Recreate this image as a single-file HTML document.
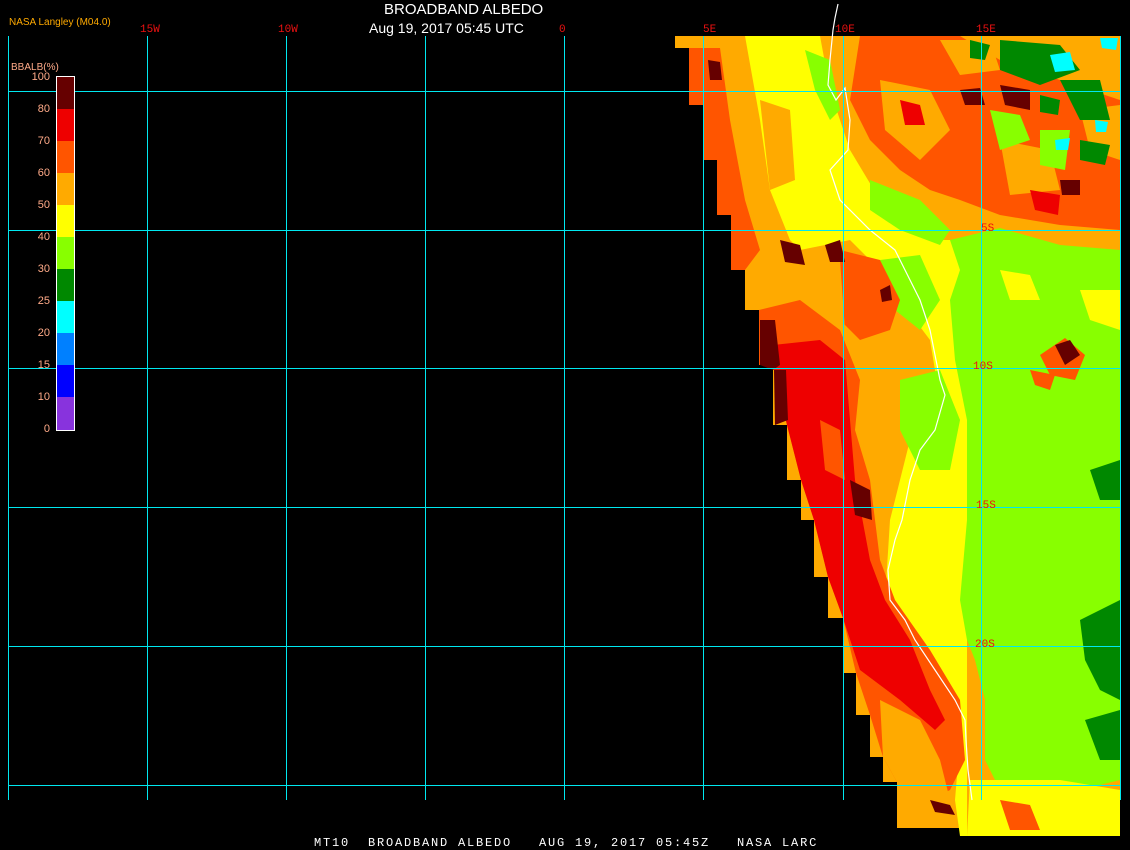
<!DOCTYPE html>
<html><head><meta charset="utf-8"><style>
html,body{margin:0;padding:0;background:#000;}
body{width:1130px;height:850px;position:relative;overflow:hidden;font-family:"Liberation Sans",sans-serif;}
.t{position:absolute;white-space:nowrap;}
.lbl{position:absolute;color:#ee1111;font-family:"Liberation Mono",monospace;font-size:11px;line-height:11px;}
.leg{position:absolute;color:#ffaa88;font-size:11px;line-height:11px;width:30px;text-align:right;left:20px;}
</style></head><body>
<svg width="1130" height="850" style="position:absolute;left:0;top:0">
<polygon fill="#ffaa00" points="675,36 1120,36 1120,836 967,836 967,828 897,828 897,782 883,782 883,757 870,757 870,715 856,715 856,673 843,673 843,618 828,618 828,577 814,577 814,520 801,520 801,480 787,480 787,425 773,425 773,365 759,365 759,310 745,310 745,270 731,270 731,215 717,215 717,160 703,160 703,105 689,105 689,48 675,48"/>
<!-- upper orange-red mottling -->
<polygon fill="#ff5500" points="860,36 960,36 1000,60 1120,100 1120,230 1060,225 1000,215 960,200 930,190 900,170 870,140 850,100"/>
<polygon fill="#ffaa00" points="880,80 930,90 950,130 920,160 885,130"/>
<polygon fill="#ffaa00" points="1000,140 1050,150 1060,190 1010,195"/>
<polygon fill="#ffaa00" points="1080,110 1120,105 1120,160 1090,150"/>
<polygon fill="#ffaa00" points="940,40 990,40 1000,70 960,75"/>
<polygon fill="#ee0000" points="900,100 920,105 925,125 905,125"/>
<polygon fill="#ee0000" points="1030,190 1060,195 1058,215 1035,210"/>
<polygon fill="#ff5500" points="689,48 720,48 730,120 745,200 760,250 745,270 731,270 731,215 717,215 717,160 703,160 703,105 689,105"/>
<polygon fill="#ffff00" points="745,36 820,36 830,90 850,150 880,200 930,240 967,240 967,836 960,836 955,800 960,740 940,690 900,640 885,600 890,520 900,480 910,440 940,400 930,340 900,300 880,270 850,240 800,250 790,240 770,190 760,120"/>
<polygon fill="#ffaa00" points="760,100 790,110 795,180 770,190"/>
<polygon fill="#88ff00" points="805,50 830,60 840,110 830,120 815,90"/>
<polygon fill="#88ff00" points="870,180 920,200 950,230 940,245 900,230 870,210"/>
<polygon fill="#88ff00" points="880,260 920,255 940,300 920,330 895,310"/>
<polygon fill="#ff5500" points="840,250 880,260 900,300 890,330 860,340 840,320"/>
<polygon fill="#ffaa00" points="800,260 840,260 845,330 820,340 800,300"/>
<!-- green right-lower -->
<polygon fill="#88ff00" points="950,240 1000,228 1060,245 1120,250 1120,780 1080,790 1040,782 1000,790 985,760 985,700 975,660 967,640 960,600 967,520 967,420 955,360 950,300 960,270"/>
<polygon fill="#88ff00" points="900,380 940,370 960,420 950,470 920,470 900,430"/>
<polygon fill="#ffff00" points="1000,270 1030,275 1040,300 1010,300"/>
<polygon fill="#ffff00" points="1080,290 1120,290 1120,330 1090,320"/>
<polygon fill="#008800" points="1080,620 1120,600 1120,700 1100,690 1085,660"/>
<polygon fill="#008800" points="1085,720 1120,710 1120,760 1100,760"/>
<polygon fill="#008800" points="1090,470 1120,460 1120,500 1100,500"/>
<polygon fill="#ff5500" points="1040,355 1065,338 1085,355 1075,380 1050,375"/>
<polygon fill="#660000" points="1055,345 1070,340 1080,355 1065,365"/>
<polygon fill="#ff5500" points="1030,370 1055,375 1050,390 1035,385"/>
<!-- left red strip -->
<polygon fill="#ff5500" points="759,310 800,300 840,330 860,380 855,430 870,480 880,560 895,600 930,650 960,700 965,760 950,790 930,800 897,782 883,757 870,715 856,673 843,618 828,577 814,520 801,480 787,425 773,365 759,365"/>
<polygon fill="#ee0000" points="773,345 820,340 845,360 850,420 855,480 870,560 885,600 910,640 930,690 945,720 935,730 900,700 860,670 843,618 828,577 814,520 801,480 787,425 773,365"/>
<polygon fill="#ff5500" points="820,420 840,430 845,480 825,470"/>
<polygon fill="#660000" points="760,320 775,320 780,365 773,370 760,365"/>
<polygon fill="#660000" points="774,370 786,370 788,420 775,425"/>
<polygon fill="#660000" points="850,480 870,490 872,520 855,515"/>
<polygon fill="#ffaa00" points="880,700 920,720 940,760 950,800 930,820 897,810 897,782 883,757"/>
<polygon fill="#ffff00" points="970,780 1060,780 1120,790 1120,836 967,836"/>
<polygon fill="#ff5500" points="1000,800 1030,805 1040,830 1010,830"/>
<polygon fill="#660000" points="930,800 950,805 955,815 935,812"/>
<polygon fill="#660000" points="780,240 800,245 805,265 785,262"/>
<polygon fill="#660000" points="825,245 840,240 845,262 830,262"/>
<polygon fill="#660000" points="1000,85 1030,90 1030,110 1005,105"/>
<polygon fill="#660000" points="960,90 980,88 985,105 965,105"/>
<polygon fill="#660000" points="708,60 720,62 722,80 710,80"/>
<polygon fill="#660000" points="880,290 890,285 892,300 882,302"/>
<polygon fill="#660000" points="1060,180 1080,180 1080,195 1062,195"/>
<polygon fill="#008800" points="1000,40 1060,45 1080,70 1040,85 1000,70"/>
<polygon fill="#008800" points="1060,80 1100,80 1110,120 1080,120"/>
<polygon fill="#008800" points="1080,140 1110,145 1105,165 1080,160"/>
<polygon fill="#008800" points="970,40 990,45 985,60 970,58"/>
<polygon fill="#008800" points="1040,95 1060,100 1058,115 1040,112"/>
<polygon fill="#88ff00" points="990,110 1020,115 1030,140 1000,150"/>
<polygon fill="#88ff00" points="1040,130 1070,130 1065,170 1040,165"/>
<polygon fill="#00ffff" points="1050,55 1070,52 1075,70 1055,72"/>
<polygon fill="#00ffff" points="1100,38 1118,38 1116,50 1102,48"/>
<polygon fill="#00ffff" points="1055,140 1070,138 1068,150 1056,150"/>
<polygon fill="#00ffff" points="1095,120 1108,122 1106,132 1096,132"/>
<polyline fill="none" stroke="#fff" stroke-width="1.2" points="838,4 835,18 833,30 830,60 828,85 836,100 845,88 850,120 848,150 830,170 840,200 870,230 895,250 905,270 920,300 930,330 940,380 945,395 935,430 920,450 910,480 902,520 895,540 888,570 890,600 905,620 915,640 935,670 955,700 965,720 966,740 968,770 972,800"/>
<g stroke="#00e8f0" stroke-width="1">
<line x1="8.5" y1="36" x2="8.5" y2="800"/>
<line x1="147.5" y1="36" x2="147.5" y2="800"/>
<line x1="286.5" y1="36" x2="286.5" y2="800"/>
<line x1="425.5" y1="36" x2="425.5" y2="800"/>
<line x1="564.5" y1="36" x2="564.5" y2="800"/>
<line x1="703.5" y1="36" x2="703.5" y2="800"/>
<line x1="843.5" y1="36" x2="843.5" y2="800"/>
<line x1="981.5" y1="36" x2="981.5" y2="800"/>
<line x1="1120.5" y1="36" x2="1120.5" y2="800"/>
<line x1="8" y1="91.5" x2="1120" y2="91.5"/>
<line x1="8" y1="230.5" x2="1120" y2="230.5"/>
<line x1="8" y1="368.5" x2="1120" y2="368.5"/>
<line x1="8" y1="507.5" x2="1120" y2="507.5"/>
<line x1="8" y1="646.5" x2="1120" y2="646.5"/>
<line x1="8" y1="785.5" x2="1120" y2="785.5"/>
</g>
<g>
<rect x="57" y="77" width="17" height="32" fill="#660000"/>
<rect x="57" y="109" width="17" height="32" fill="#ee0000"/>
<rect x="57" y="141" width="17" height="32" fill="#ff5500"/>
<rect x="57" y="173" width="17" height="32" fill="#ffaa00"/>
<rect x="57" y="205" width="17" height="32" fill="#ffff00"/>
<rect x="57" y="237" width="17" height="32" fill="#88ff00"/>
<rect x="57" y="269" width="17" height="32" fill="#008800"/>
<rect x="57" y="301" width="17" height="32" fill="#00ffff"/>
<rect x="57" y="333" width="17" height="32" fill="#0080ff"/>
<rect x="57" y="365" width="17" height="32" fill="#0000ff"/>
<rect x="57" y="397" width="17" height="33" fill="#8833dd"/>
<rect x="56.5" y="76.5" width="18" height="354" fill="none" stroke="#fff" stroke-width="1"/>
</g>
</svg>
<div class="t" style="left:384px;top:1px;color:#fff;font-size:15px;">BROADBAND ALBEDO</div>
<div class="t" style="left:369px;top:20px;color:#fff;font-size:14px;">Aug 19, 2017 05:45 UTC</div>
<div class="t" style="left:9px;top:17px;color:#ffaa00;font-size:10px;">NASA Langley (M04.0)</div>
<div class="lbl" style="left:140px;top:25px;">15W</div>
<div class="lbl" style="left:278px;top:25px;">10W</div>
<div class="lbl" style="left:559px;top:25px;">0</div>
<div class="lbl" style="left:703px;top:25px;">5E</div>
<div class="lbl" style="left:835px;top:25px;">10E</div>
<div class="lbl" style="left:976px;top:25px;">15E</div>
<div class="lbl" style="left:981px;top:224px;">5S</div>
<div class="lbl" style="left:973px;top:362px;">10S</div>
<div class="lbl" style="left:976px;top:501px;">15S</div>
<div class="lbl" style="left:975px;top:640px;">20S</div>
<div class="t" style="left:11px;top:62px;color:#ffaa88;font-size:10px;">BBALB(%)</div>
<div class="leg" style="top:72px;">100</div>
<div class="leg" style="top:104px;">80</div>
<div class="leg" style="top:136px;">70</div>
<div class="leg" style="top:168px;">60</div>
<div class="leg" style="top:200px;">50</div>
<div class="leg" style="top:232px;">40</div>
<div class="leg" style="top:264px;">30</div>
<div class="leg" style="top:296px;">25</div>
<div class="leg" style="top:328px;">20</div>
<div class="leg" style="top:360px;">15</div>
<div class="leg" style="top:392px;">10</div>
<div class="leg" style="top:424px;">0</div>
<div class="t" style="left:314px;top:836px;color:#fff;font-family:'Liberation Mono',monospace;font-size:12px;letter-spacing:1.8px;white-space:pre;">MT10  BROADBAND ALBEDO   AUG 19, 2017 05:45Z   NASA LARC</div>
</body></html>
